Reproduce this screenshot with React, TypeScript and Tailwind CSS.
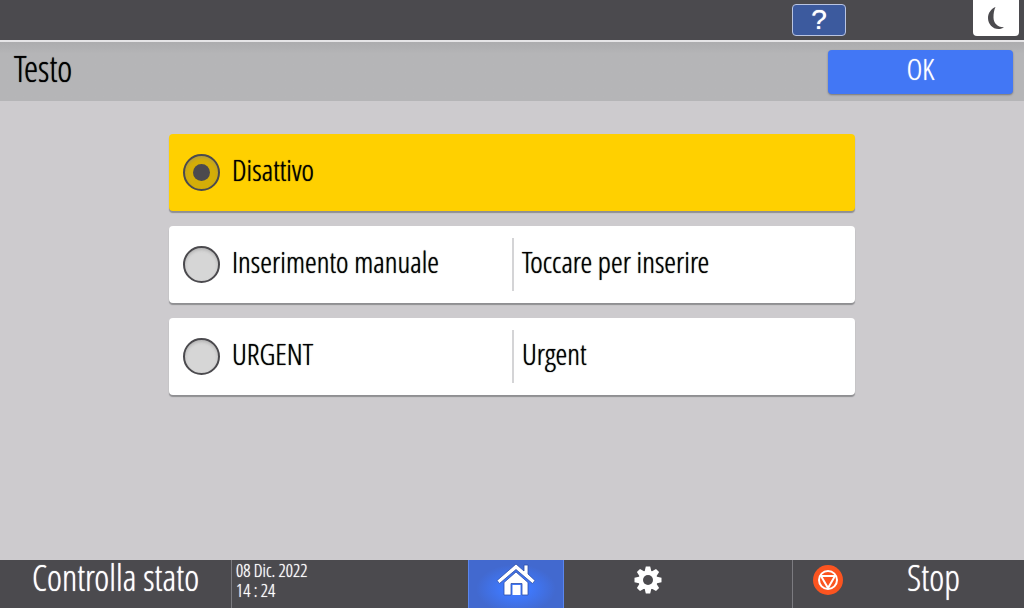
import { useState } from "react";

type Option = { id: string; label: string; detail?: string };

const OPTIONS: Option[] = [
  { id: "off", label: "Disattivo" },
  { id: "manual", label: "Inserimento manuale", detail: "Toccare per inserire" },
  { id: "urgent", label: "URGENT", detail: "Urgent" },
];

function MoonIcon() {
  return (
    <svg width="16" height="24" viewBox="0 0 16 24" aria-hidden="true">
      <path d="M7.500 1C3 3 0 7 0 12c0 6 4.500 11 10.500 11 2 0 4-.6 5.500-1.800C9.500 21.500 5.500 17 5.500 11.500 5.500 7.500 6 4 7.500 1z" fill="#4b4a4e" />
    </svg>
  );
}

function HomeIcon() {
  return (
    <svg width="40" height="34" viewBox="0 0 40 34" aria-hidden="true">
      <path
        d="M28 2h4v9l7 6.500-2.500 3L20 6.500 3.500 20.500 1 17.500 20 1l8 7z"
        fill="#fff"
        stroke="#2d4fa8"
        strokeWidth="0.8"
      />
      <path d="M20 9 32 19.500V32h-6V20.500H15V32H8V19.500z" fill="#fff" stroke="#2d4fa8" strokeWidth="0.8" />
      <path d="M16.500 22h8v10h-8z" fill="#fff" />
    </svg>
  );
}

function GearIcon() {
  return (
    <svg width="28" height="28" viewBox="-14 -14 28 28" aria-hidden="true">
      <g fill="#fff">
        {[0, 45, 90, 135].map((a) => (
          <path key={a} d="M-3.500-8-2.200-13.500H2.200L3.500-8V8L2.200 13.500H-2.200L-3.500 8z" transform={`rotate(${a})`} />
        ))}
        <circle r="9.500" />
      </g>
      <circle r="5" fill="#4b4a4e" />
    </svg>
  );
}

function StopIcon() {
  return (
    <svg width="30" height="30" viewBox="0 0 30 30" aria-hidden="true">
      <circle cx="15" cy="15" r="15" fill="#fb5420" />
      <circle cx="15" cy="15" r="9" fill="none" stroke="#fff" strokeWidth="2" />
      <path d="M8 11h14l-7 12z" fill="none" stroke="#fff" strokeWidth="2" strokeLinejoin="round" />
    </svg>
  );
}

function OptionRow({ option, checked, onSelect }: { option: Option; checked: boolean; onSelect: () => void }) {
  return (
    <li
      className={`flex min-h-[77px] items-center rounded shadow-[0_2px_1px_#8f8f92] ${
        checked ? "bg-[#ffd000]" : "bg-white"
      }`}
    >
      <label className="flex flex-1 items-center gap-3 pl-3.5">
        <input
          type="radio"
          name="text"
          checked={checked}
          onChange={onSelect}
          className="grid size-[37px] shrink-0 appearance-none place-items-center rounded-full border-2 border-[#4b4a4e] bg-[#d6d6d6] shadow-[inset_0_2px_3px_#8886] checked:bg-[#d4ae08] checked:before:size-[17px] checked:before:rounded-full checked:before:bg-[#4b4a4e] checked:before:content-['']"
        />
        <span className="pb-1.5">{option.label}</span>
      </label>
      {option.detail && (
        <button
          type="button"
          className="flex h-[53px] w-1/2 items-center border-l-2 border-[#d4d4d6] pb-1.5 pl-2 text-left [text-shadow:0_0_1px_currentColor]"
        >
          {option.detail}
        </button>
      )}
    </li>
  );
}

export default function App() {
  const [selected, setSelected] = useState("off");

  return (
    <div className="flex min-h-screen flex-col bg-[#cdcbce] font-['Open_Sans_Condensed_Light','Open_Sans_Condensed','Open_Sans',sans-serif] text-[30px] leading-8 font-light text-black [text-shadow:0_0_1px_currentColor]">
      <div className="flex h-[42px] items-start justify-end border-b-2 border-[#e6e5e7] bg-[#4b4a4e] pr-[5px]">
        <button
          type="button"
          aria-label="Guida"
          className="mt-1 mr-[127px] h-8 w-[54px] rounded border border-[#b9c4e2] bg-[#3c5a9e] font-['Liberation_Sans',sans-serif] text-[28px] leading-7 text-white [text-shadow:0_0_1px_currentColor]"
        >
          ?
        </button>
        <button
          type="button"
          aria-label="Risparmio energia"
          className="flex h-9 w-[46px] items-center justify-center rounded-b-sm bg-white"
        >
          <MoonIcon />
        </button>
      </div>

      <header className="flex h-[59px] items-center justify-between bg-linear-to-b from-[#acacae] to-[#b5b5b7] to-20% pr-[11px] pl-3.5">
        <h1 className="pb-1.5 text-[36px]">Testo</h1>
        <button
          type="button"
          className="h-11 w-[185px] rounded bg-[#4277f5] pb-1.5 text-white shadow-[0_1px_2px_#777] [text-shadow:0_0_1px_currentColor]"
        >
          OK
        </button>
      </header>

      <main className="flex-1 px-4 pt-[33px]">
        <ul role="radiogroup" aria-label="Testo" className="mx-auto flex max-w-[686px] flex-col gap-[15px]">
          {OPTIONS.map((o) => (
            <OptionRow key={o.id} option={o} checked={o.id === selected} onSelect={() => setSelected(o.id)} />
          ))}
        </ul>
      </main>

      <footer className="grid h-12 grid-cols-[232fr_236fr_96fr_228fr_232fr] bg-[#4b4a4e] text-[36px] text-white">
        <button type="button" className="border-r border-[#7c7b80] pb-3 [text-shadow:0_0_1px_currentColor]">
          Controlla stato
        </button>
        <time dateTime="2022-12-08T14:24" className="flex flex-col pl-1 text-[18px] leading-5">
          <span>08 Dic. 2022</span>
          <span>14 : 24</span>
        </time>
        <button
          type="button"
          aria-label="Home"
          className="flex items-center justify-center border-x border-[#5a86ee] bg-radial-[at_50%_60%] from-[#3f78fb] from-20% to-[#4269cf] to-60% pb-2"
        >
          <HomeIcon />
        </button>
        <button type="button" aria-label="Impostazioni" className="flex items-center justify-center pr-[60px] pb-2">
          <GearIcon />
        </button>
        <button
          type="button"
          className="flex items-center border-l border-[#7c7b80] pb-2 pl-5 [text-shadow:0_0_1px_currentColor]"
        >
          <StopIcon />
          <span className="flex-1 pb-1">Stop</span>
        </button>
      </footer>
    </div>
  );
}
